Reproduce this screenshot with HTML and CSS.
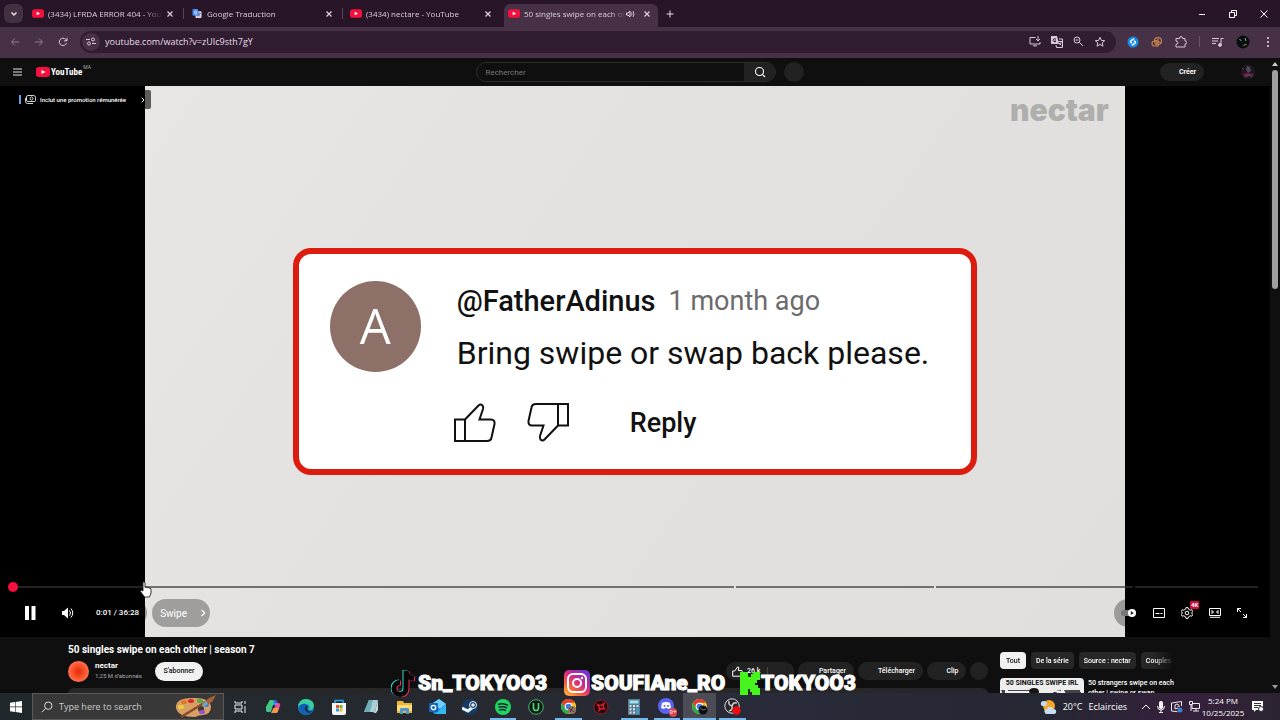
FILE: index.html
```html
<!DOCTYPE html>
<html lang="fr">
<head>
  <meta charset="UTF-8">
  <title>50 singles swipe on each other - YouTube</title>
  <link rel="stylesheet" href="styles.css">
</head>
<body>

  <svg class="sprites" aria-hidden="true">
    <symbol id="yt" viewBox="0 0 14 10"><rect width="14" height="10" rx="3" fill="#f50f3d"/><path d="M5.5 3v4l4-2z" fill="#fff"/></symbol>
    <symbol id="close" viewBox="0 0 8 8"><path d="M1.500 1.500l5 5m0-5l-5 5" fill="none" stroke="currentColor" stroke-width="1.2"/></symbol>
    <symbol id="chrome" viewBox="0 0 18 18">
      <circle cx="9" cy="9" r="8" fill="#f5c52b"/>
      <path d="M2.100 5A8 8 0 0 1 15.900 5H9A4 4 0 0 0 5.500 11z" fill="#e33b2e"/>
      <path d="M2.100 5A8 8 0 0 0 9 17l3.500-6A4 4 0 0 1 5.500 11z" fill="#2da94f"/>
      <circle cx="9" cy="9" r="4" fill="#fff"/><circle cx="9" cy="9" r="3" fill="#3b7ded"/>
    </symbol>
  </svg>

  <header class="tabs">
    <button class="tab-search" aria-label="Search tabs"><svg width="8" height="8" viewBox="0 0 8 8"><path d="M1.500 2.500L4 5l2.500-2.500" fill="none" stroke="#e8dce8" stroke-width="1.500"/></svg></button>
    <div class="tab">
      <svg class="favicon"><use href="#yt"/></svg>
      <span class="tab-title">(3434) LFRDA ERROR 404 - You</span>
      <button class="close" aria-label="Close"><svg><use href="#close"/></svg></button>
    </div>
    <div class="tab">
      <svg class="favicon" viewBox="0 0 12 12"><rect x="4" y="3" width="8" height="9" rx="1" fill="#dcdcdc"/><path d="M6 6h5M8.500 5v1M7 10l3-4M7 7l3 3" stroke="#667" fill="none"/><path d="M1 0h6l2.500 9H1a1 1 0 0 1-1-1V1a1 1 0 0 1 1-1z" fill="#4688ef"/><path d="M6 3.500A2 2 0 1 0 6 6V5H4.500" stroke="#fff" fill="none"/></svg>
      <span class="tab-title">Google Traduction</span>
      <button class="close" aria-label="Close"><svg><use href="#close"/></svg></button>
    </div>
    <div class="tab no-line">
      <svg class="favicon"><use href="#yt"/></svg>
      <span class="tab-title">(3434) nectare - YouTube</span>
      <button class="close" aria-label="Close"><svg><use href="#close"/></svg></button>
    </div>
    <div class="tab active no-line">
      <svg class="favicon"><use href="#yt"/></svg>
      <span class="tab-title">50 singles swipe on each ot</span>
      <svg class="sound" width="9" height="8" viewBox="0 0 9 8"><path d="M.5 3h1.500l2-2v6l-2-2H.5z" fill="none" stroke="#e8dce8"/><path d="M5.500 2.500q1 1.500 0 3M7 1q2 3 0 6" fill="none" stroke="#e8dce8" stroke-width=".8"/></svg>
      <button class="close" aria-label="Close"><svg><use href="#close"/></svg></button>
    </div>
    <button class="new-tab" aria-label="New tab"><svg width="8" height="8" viewBox="0 0 8 8"><path d="M4 .5v7M.5 4h7" stroke="#e8dce8"/></svg></button>
    <div class="window-buttons">
      <button aria-label="Minimize"><svg width="8" height="8" viewBox="0 0 8 8"><path d="M1 4.500h6" stroke="#fff"/></svg></button>
      <button aria-label="Restore"><svg width="8" height="8" viewBox="0 0 8 8"><path d="M.5 2.500h5v5h-5zM2.500 2.500v-2h5v5h-2" fill="none" stroke="#fff"/></svg></button>
      <button aria-label="Close window"><svg width="8" height="8" viewBox="0 0 8 8"><path d="M.5.5l7 7m0-7l-7 7" stroke="#fff"/></svg></button>
    </div>
  </header>

  <div class="toolbar">
    <button class="nav dim" aria-label="Back"><svg width="10" height="10" viewBox="0 0 10 10"><path d="M9 5H1.500M5 1.500L1.500 5 5 8.500"/></svg></button>
    <button class="nav dim" aria-label="Forward"><svg width="10" height="10" viewBox="0 0 10 10"><path d="M1 5h7.500M5 1.500L8.500 5 5 8.500"/></svg></button>
    <button class="nav" aria-label="Reload"><svg width="10" height="10" viewBox="0 0 10 10"><path d="M8.500 6A3.700 3.700 0 1 1 7.800 2.500L9 3.700M9 .8v3H6"/></svg></button>
    <div class="omnibox">
      <button class="site-info" aria-label="Site information"><svg width="10" height="9" viewBox="0 0 10 9"><path d="M0 2.500h4M6 6.500h4"/><circle cx="7" cy="2.500" r="1.500"/><circle cx="3" cy="6.500" r="1.500"/></svg></button>
      <input class="url" type="text" aria-label="Address" value="youtube.com/watch?v=zUIc9sth7gY">
      <div class="omni-icons">
        <button aria-label="Install"><svg width="12" height="11" viewBox="0 0 12 11"><path d="M6.500 1.500H1v6.500h10V6M4 9.800h4M9 0v4.500M7 3l2 2 2-2"/></svg></button>
        <button aria-label="Translate"><svg width="12" height="12" viewBox="0 0 12 12"><path d="M0 0h6l2 8H0z" fill="#d8c9d8" stroke="none"/><path d="M5 3.500A1.500 1.500 0 1 0 5 5H3.500" stroke="#311d31"/><path d="M8 3h3.500v8.500H5.500L5 9M7 5.500h4M8.500 8.500L10.500 6M8 7l2.500 2.500"/></svg></button>
        <button aria-label="Zoom"><svg width="11" height="11" viewBox="0 0 11 11"><circle cx="4" cy="4" r="3"/><path d="M6.300 6.300L10 10M2.500 4h3"/></svg></button>
        <button aria-label="Bookmark"><svg width="12" height="12" viewBox="0 0 12 12"><path d="M6 1.300l1.400 3.100 3.300.3-2.500 2.200.8 3.300L6 8.400l-3 1.800.8-3.300-2.500-2.200 3.300-.3z"/></svg></button>
      </div>
    </div>
    <div class="extensions">
      <button aria-label="Shazam"><svg width="12" height="12" viewBox="0 0 12 12"><circle cx="6" cy="6" r="5.500" fill="#198ae8" stroke="none"/><path d="M7 2.800L4.500 4.300Q2.500 6 5 7M5 9.200l2.500-1.500Q9.500 6 7 5" stroke="#fff" stroke-width="1.400"/></svg></button>
      <button aria-label="Cookies"><svg width="12" height="12" viewBox="0 0 12 12"><g stroke="#c9844e" stroke-width="1.200"><circle cx="7" cy="5" r="3.500"/><circle cx="3.500" cy="7.500" r="2.500"/><path d="M7 1.500V9M4 4l6 3M8 8.500L6 11"/></g></svg></button>
      <button aria-label="Extensions"><svg width="12" height="12" viewBox="0 0 12 12"><path d="M1 2.500h3.500q0-2 1.500-2t1.500 2H10V5q1.700 0 1.700 1.500T10 8v3H1V8.300Q3 8 3 6.700T1 5z"/></svg></button>
      <span class="divider"></span>
      <button aria-label="Media"><svg width="12" height="10" viewBox="0 0 12 10"><path d="M0 1.500h7M0 4h6M0 6.500h4M9 8V1.500h2.500"/><circle cx="8" cy="8" r="1.400" fill="#d8c9d8"/></svg></button>
      <button aria-label="Profile"><svg width="14" height="14" viewBox="0 0 14 14"><circle cx="7" cy="7" r="6.500" fill="#090d10" stroke="none"/><path d="M3.500 4.500l2 1M9 3l1 3" stroke="#8b9"/><path d="M8 9l3 1M7 11l2-1" stroke="#697c28"/></svg></button>
      <button class="kebab" aria-label="Menu"><svg width="4" height="12" viewBox="0 0 4 12"><g fill="#e8dce8" stroke="none"><circle cx="2" cy="2" r="1"/><circle cx="2" cy="6" r="1"/><circle cx="2" cy="10" r="1"/></g></svg></button>
    </div>
  </div>

  <div class="viewport">
    <div class="page">
      <div class="masthead">
        <button class="burger" aria-label="Menu"><svg width="9" height="8" viewBox="0 0 9 8"><path d="M0 1h9M0 4h9M0 7h9" stroke="#e5e5e5"/></svg></button>
        <a class="logo" href="#"><svg width="14" height="10"><use href="#yt"/></svg><span class="logo-text">YouTube</span><span class="country">MA</span></a>
        <form class="search">
          <input type="text" aria-label="Rechercher" placeholder="Rechercher">
          <button type="button" aria-label="Lancer la recherche"><svg width="12" height="12" viewBox="0 0 12 12"><circle cx="5.500" cy="5.500" r="4" fill="none" stroke="#fff" stroke-width="1.100"/><path d="M8.500 8.500l2.500 2.500" stroke="#fff" stroke-width="1.100"/></svg></button>
        </form>
        <button class="mic" aria-label="Recherche vocale"></button>
        <button class="create">Créer</button>
        <svg class="me" width="16" height="16" viewBox="0 0 16 16"><circle cx="8" cy="8" r="7.500" fill="#1d1720"/><path d="M7 2l3 1 1 4-3 2-2-3z" fill="#4f4a58"/><path d="M3 10l4-1 6 1 1 2-5-1-5 2z" fill="#7d1749"/><path d="M5 13l4-2 3 2" stroke="#55606a" fill="none"/><path d="M2 4l2 2" stroke="#8d214c"/></svg>
      </div>

      <div class="player">
        <div class="video">
          <span class="watermark">nectar</span>
          <div class="comment">
            <span class="letter">A</span>
            <div class="comment-body">
              <p class="author"><b>@FatherAdinus</b><span>1 month ago</span></p>
              <p class="message">Bring swipe or swap back please.</p>
              <div class="comment-actions">
                <button aria-label="Like"><svg width="42" height="39" viewBox="0 0 42 39"><path d="M1 16.500h10V38H1zM11 16.500L24.500 2.500Q26.500.5 28.500 2.500q1 1 .5 3.500l-3.500 10.500H37q4 0 3.500 4.500L37.500 34.500Q37 38 33 38H11"/></svg></button>
                <button aria-label="Dislike"><svg width="42" height="39" viewBox="0 0 42 39"><path d="M41 22.500H31V1h10zM31 22.500L17.500 36.500Q15.500 38.500 13.500 36.500q-1-1-.5-3.500l3.500-10.500H5q-4 0-3.500-4.500L4.500 4.500Q5 1 9 1h22"/></svg></button>
                <button class="reply">Reply</button>
              </div>
            </div>
          </div>
        </div>

        <a class="promo" href="#">
          <svg width="11" height="9" viewBox="0 0 11 9"><path d="M3 .5h5.500q2 0 2 2v3q0 1-1 1H3q-1.500 0-1.500-1.500V2Q1.500.5 3 .5zM.5 3v3.500q0 2 2 2H8" fill="none" stroke="#eee" stroke-width=".9"/><circle cx="6.500" cy="3.500" r="1.500" fill="none" stroke="#eee" stroke-width=".9"/></svg>
          <span>Inclut une promotion rémunérée</span>
          <svg class="promo-arrow" width="4" height="6" viewBox="0 0 4 6"><path d="M.7.7L3 3 .7 5.300" fill="none" stroke="#fff"/></svg>
        </a>

        <div class="controls">
          <div class="progress">
            <i class="chapter c1"></i><i class="chapter c2"></i><i class="chapter c3"></i><i class="chapter c4"></i>
            <span class="scrubber"></span>
          </div>
          <div class="buttons">
            <button class="pause" aria-label="Pause"><svg width="11" height="14" viewBox="0 0 11 14"><path d="M0 0h4v14H0zM6.500 0h4v14h-4z" fill="#fff"/></svg></button>
            <button class="volume" aria-label="Volume"><svg width="12" height="12" viewBox="0 0 12 12"><path d="M0 4h2l4-3.500v11L2 8H0z" fill="#fff"/><path d="M7.500 3.500q2 2.500 0 5M9 1.500q3.500 4.500 0 9" fill="none" stroke="#fff"/></svg></button>
            <span class="time">0:01 / 36:28</span>
            <button class="chapter-button">Swipe <svg width="6" height="8" viewBox="0 0 6 8"><path d="M1.500.8L4.700 4 1.500 7.200" fill="none" stroke="#fff" stroke-width="1.200"/></svg></button>
            <div class="settings">
              <button aria-label="Lecture automatique"><svg width="16" height="10" viewBox="0 0 16 10"><rect y="2" width="14" height="6" rx="3" fill="#777"/><circle cx="11" cy="5" r="4" fill="#fff"/><path class="play" d="M9.800 3v4l3-2z"/></svg></button>
              <button aria-label="Sous-titres"><svg width="12" height="10" viewBox="0 0 12 10"><path d="M.5.5h11v9H.5zM2.500 5.500h4M7.500 5.500h2"/></svg></button>
              <button class="gear" aria-label="Paramètres"><svg width="12" height="12" viewBox="0 0 12 12"><path d="M5 .6h2l.5 1.600 1.700 1 1.600-.4 1 1.700L10.600 6l1.200 1.500-1 1.700-1.600-.4-1.700 1-.5 1.600H5l-.5-1.600-1.700-1-1.600.4-1-1.700L1.400 6 .2 4.500l1-1.700 1.600.4 1.700-1z"/><circle cx="6" cy="6" r="1.800"/></svg><span class="badge">4K</span></button>
              <button aria-label="Mode cinéma"><svg width="12" height="10" viewBox="0 0 12 10"><path d="M.5.5h11v7H.5zM1 9.300h10M3 2.500v3L4.500 4zM9 2.500v3L7.500 4z"/></svg></button>
              <button aria-label="Plein écran"><svg width="10" height="10" viewBox="0 0 10 10"><path d="M.5 4V.5H4M.5.500l3.500 3.500M9.500 6v3.500H6M9.500 9.500L6 6"/></svg></button>
            </div>
          </div>
        </div>
        <svg class="cursor" width="14" height="17" viewBox="0 0 14 17"><path d="M4 1q1.500-.8 2 1v4.500l1-.5 1 .7 1-.4 1 .9 1-.2 1 1v4l-1.500 4H5.500L1.500 10.500Q1.500 8.500 4 10z" fill="#fff" stroke="#222" stroke-width=".9"/></svg>
      </div>

      <div class="below">
        <main class="primary">
          <h1>50 singles swipe on each other | season 7</h1>
          <div class="channel-row">
            <span class="channel-pic"></span>
            <div class="channel"><b>nectar</b><span>1,25 M d'abonnés</span></div>
            <button class="subscribe">S'abonner</button>
            <div class="actions">
              <button class="like"><svg width="11" height="11" viewBox="0 0 11 11"><path d="M.7 5h2L5.500 1q1.500-.5 1.300 1L6.200 4.500h3q1.300 0 1 1.300l-1 3.400q-.3 1-1.300 1H.7z" fill="none" stroke="#fff"/></svg><span>26 k</span></button>
              <button class="share">Partager</button>
              <button class="download">Télécharger</button>
              <button class="clip">Clip</button>
              <button class="more" aria-label="Plus"></button>
            </div>
          </div>
          <div class="description"></div>
        </main>
        <aside class="secondary">
          <div class="chips">
            <button class="chip selected">Tout</button>
            <button class="chip">De la série</button>
            <button class="chip">Source : nectar</button>
            <button class="chip">Couples</button>
          </div>
          <div class="suggestion">
            <div class="thumb"><span>50 SINGLES SWIPE IRL</span>
              <svg width="84" height="12" viewBox="0 0 84 12"><path d="M1 2h4v10M8 2h24v1H8zM8 5h3v2H8zM14 5h8v1M56 2h5v1M64 2h16v4H66zM76 4h5v8" fill="#444"/><path d="M30 12q0-7 4-7t4 7" fill="#b98468"/><path d="M29 4q0-4 5-4t5 4l-1 2-8-1z" fill="#17130f"/><path d="M50 12q1-8 5-8t4 8" fill="#2a2423"/></svg>
            </div>
            <a class="suggestion-title" href="#">50 strangers swipe on each other | swipe or swap</a>
          </div>
        </aside>
      </div>
    </div>

    <div class="scrollbar">
      <svg width="6" height="4" viewBox="0 0 6 4"><path d="M0 4l3-4 3 4z" fill="#ccc"/></svg>
      <span class="scroll-thumb"></span>
      <svg width="6" height="4" viewBox="0 0 6 4"><path d="M0 0l3 4 3-4z" fill="#999"/></svg>
    </div>
  </div>

  <div class="socials">
    <div class="social">
      <svg width="26" height="28" viewBox="0 0 26 28"><g fill="none" stroke-width="5"><path d="M14 1v18a6 6 0 1 1-6-6M14 2q1 6 8 7" stroke="#35d6cc"/><path d="M16 2v18a6 6 0 1 1-6-6M16 3q1 6 8 7" stroke="#e92e58"/><path d="M15 1.500v18a6 6 0 1 1-6-6M15 2.500q1 6 8 7" stroke="#060606"/></g></svg>
      <span>Sn_TOKYOO3</span>
    </div>
    <div class="social">
      <svg width="26" height="26" viewBox="0 0 26 26"><defs><linearGradient id="ig" x1="0" y1="1" x2=".8" y2="0"><stop offset="0" stop-color="#ffc63e"/><stop offset=".3" stop-color="#fa6a35"/><stop offset=".6" stop-color="#d42a86"/><stop offset="1" stop-color="#6c37d6"/></linearGradient></defs><rect width="26" height="26" rx="5" fill="url(#ig)"/><rect x="4" y="4" width="18" height="18" rx="5" fill="none" stroke="#fff" stroke-width="2"/><circle cx="13" cy="13" r="4" fill="none" stroke="#fff" stroke-width="2"/><circle cx="18" cy="8" r="1.200" fill="#fff"/></svg>
      <span>SOUFIAne_RO</span>
    </div>
    <div class="social">
      <svg width="20" height="23" viewBox="0 0 20 23"><path d="M0 0h8v5h3V2h2V0h7v8h-3v3h-2v2h3v3h2v7h-8v-3h-2v-3H8v6H0z" fill="#45f51d"/></svg>
      <span>TOKYOO3</span>
    </div>
  </div>

  <footer class="taskbar">
    <button class="start" aria-label="Start"><svg width="12" height="12" viewBox="0 0 12 12"><path d="M0 1.700L5 1v4.600H0zM5.600.9L12 0v5.600H5.600zM0 6.300h5V11l-5-.7zM5.600 6.300H12V12l-6.400-.9z" fill="#fff"/></svg></button>
    <label class="task-search">
      <svg width="12" height="12" viewBox="0 0 12 12"><circle cx="7.300" cy="4.700" r="3.700" fill="none" stroke="#ddd"/><path d="M4.500 7.500L.8 11.200" stroke="#ddd"/></svg>
      <input type="text" placeholder="Type here to search" aria-label="Type here to search">
      <svg width="42" height="24" viewBox="0 0 42 24"><path d="M1 13Q0 3 17 3q18-1 19 9 0 7-8 8-4 0-8 2Q3 22 1 13z" fill="#d9a066"/><circle cx="26" cy="14" r="3" fill="#3a3a3a"/><ellipse cx="6" cy="12" rx="3" ry="2" fill="#f1cf3b"/><ellipse cx="9" cy="7" rx="3" ry="2" fill="#e97327"/><ellipse cx="16" cy="6" rx="3" ry="2" fill="#d12c2f"/><ellipse cx="25" cy="6" rx="3" ry="2" fill="#4dae4c"/><ellipse cx="31" cy="10" rx="3" ry="2" fill="#4185d6"/><ellipse cx="27" cy="17" rx="3" ry="2" fill="#9a51c9"/><path d="M6 22L34 5" stroke="#8b4a27" stroke-width="2.500"/><path d="M30 7l4-4 7-3-4 7-5 3z" fill="#aa623d"/><path d="M27 9l4-3 2 3-4 3z" fill="#70a5c4"/></svg>
    </label>

    <nav class="apps">
      <button aria-label="Task View"><svg width="12" height="12" viewBox="0 0 12 12"><path d="M1 0v2h7V0M1 12v-2h7v2M1 4h7v4H1zM11 0v3M11 5v7" fill="none" stroke="#eee"/></svg></button>
      <button aria-label="Copilot"><svg width="16" height="15" viewBox="0 0 16 15"><path d="M5 1h5q1.500 0 2 2l1 3H8L6 13H3q-2 0-2-2V8z" fill="#2ba5e8"/><path d="M5 1h4L6 11q-.5 2-3 2-2 0-2-2V8z" fill="#44c879"/><path d="M11 14H6q2 0 2.500-2L11 4h2q3 0 2 3l-2 5q-.5 2-2 2z" fill="#e2559d"/><path d="M6 14l2.500-5H14l-1 3q-.5 2-2 2z" fill="#f79549"/><path d="M8 1h2q2 0 2.500 3H10z" fill="#355fdf"/></svg></button>
      <button aria-label="Edge"><svg width="16" height="16" viewBox="0 0 16 16"><circle cx="8" cy="8" r="8" fill="#1687d7"/><path d="M0 8Q1 0 8 0q8 1 8 7-1 4-5 4 2-5-3-6-6 0-8 3z" fill="#3bcf9c"/><path d="M1 7q6-5 9 0-4 0-3 4 3 4 8 1-3 4-7 4Q1 15 1 7z" fill="#1361b4"/><path d="M10 7q-2 4 1 5 3 1 4-1-2 4-6 2-4-3-1-6z" fill="#182d3c"/></svg></button>
      <button aria-label="Store"><svg width="16" height="16" viewBox="0 0 16 16"><path d="M4 4V1.500h8V4" fill="none" stroke="#26a4e8" stroke-width="1.500"/><path d="M1 4h14v10q0 2-2 2H3q-2 0-2-2z" fill="#f5f5f5"/><path d="M5 6h3v3H5z" fill="#ef5128"/><path d="M8.500 6h3v3h-3z" fill="#78b526"/><path d="M5 9.500h3v3H5z" fill="#21a2e1"/><path d="M8.500 9.500h3v3h-3z" fill="#f6b71f"/></svg></button>
      <button aria-label="Notepad"><svg width="15" height="15" viewBox="0 0 15 15"><path d="M5 1h9l-3 12H0z" fill="#a8d0d4"/><path d="M5 1h4L6 13H0z" fill="#6faeb8"/><path d="M14 1v10l-2 3H9l2-1z" fill="#d4dbd9"/></svg></button>
      <button aria-label="Explorer"><svg width="15" height="14" viewBox="0 0 15 14"><path d="M0 1h6l1 2h8v10H0z" fill="#efb535"/><path d="M0 5h15v6H0z" fill="#ffdc77"/><path d="M3 14V9q0-1 1-1h7q1 0 1 1v5h-3v-3H6v3z" fill="#4c98c9"/></svg></button>
      <button aria-label="Outlook"><svg width="17" height="16" viewBox="0 0 17 16"><path d="M4 4l6-4 7 5v9q0 1-1 1H6q-2 0-2-2z" fill="#178be5"/><path d="M4 4l6-4 7 5-6 5z" fill="#72d0ff"/><path d="M6 15l11-9v8q0 1-1 1z" fill="#35b8f5"/><rect y="4" width="9" height="9" rx="1" fill="#1265bb"/><circle cx="4.500" cy="8.500" r="2.200" fill="none" stroke="#fff" stroke-width="1.300"/></svg></button>
      <button aria-label="Steam"><svg width="16" height="16" viewBox="0 0 16 16"><circle cx="8" cy="8" r="8" fill="#173a64"/><path d="M0 9l6 3 5-4" stroke="#e8f3fb" stroke-width="3" fill="none"/><circle cx="11" cy="6" r="3.500" fill="#173a64" stroke="#e8f3fb"/><circle cx="11" cy="6" r="1.800" fill="#e8f3fb"/></svg></button>
      <button class="open" aria-label="Spotify"><svg width="16" height="16" viewBox="0 0 16 16"><circle cx="8" cy="8" r="8" fill="#1ed760"/><path d="M3 5.500q5-2 10 .8M3.500 8.300q4.500-1.500 8.500.7M4 11q4-1.200 7 .6" fill="none" stroke="#123" stroke-width="1.500"/></svg></button>
      <button aria-label="Uninstaller"><svg width="16" height="16" viewBox="0 0 16 16"><circle cx="8" cy="8" r="7.300" fill="#0d1b14" stroke="#4ab26a"/><path d="M5.500 4v5q0 2.500 2.500 2.500t2.500-2.500V4" fill="none" stroke="#58ca77" stroke-width="1.700"/></svg></button>
      <button class="open" aria-label="Chrome"><svg width="17" height="17"><use href="#chrome"/><circle cx="12" cy="12" r="4" fill="#957568"/><path d="M9 10l5 4M13 9l-3 5" stroke="#46372e"/></svg></button>
      <button aria-label="Recorder"><svg width="16" height="16" viewBox="0 0 16 16"><circle cx="8" cy="8" r="7" fill="#220b0e" stroke="#981927"/><path d="M4.500 5.500l3 1 3.500-2-1 3 1.500 2.500-3-.5L6 11.500 6.500 9z" fill="none" stroke="#e0202f" stroke-width="1.300"/></svg></button>
      <button class="open" aria-label="Calculator"><svg width="12" height="16" viewBox="0 0 12 16"><rect width="12" height="16" fill="#587b90"/><path d="M1.500 1.500h9v3h-9z" fill="#9ee1f3"/><path d="M1.500 6h2v2h-2zM5 6h2v2H5zM8.500 6h2v2h-2zM1.500 9.300h2v2h-2zM5 9.300h2v2H5zM1.500 12.600h2v2h-2zM5 12.600h2v2H5z" fill="#dae4e9"/><path d="M8.500 9.300h2v5.300h-2z" fill="#39a9e4"/></svg></button>
      <button class="open" aria-label="Discord"><svg width="17" height="17" viewBox="0 0 17 17"><circle cx="8" cy="8" r="8" fill="#5865f2"/><path d="M4 5q4-2 8 0l1 5-3 1-1-1H7l-1 1-3-1z" fill="#fff"/><circle cx="6.500" cy="8" r="1" fill="#5865f2"/><circle cx="10" cy="8" r="1" fill="#5865f2"/></svg><span class="count">9+</span></button>
      <button class="open current" aria-label="Chrome"><svg width="17" height="17"><use href="#chrome"/><circle cx="12" cy="12" r="4.500" fill="#0b1014"/><path d="M9 10l3 2 3-1" stroke="#667" fill="none"/></svg></button>
      <button class="open" aria-label="OBS"><svg width="17" height="17" viewBox="0 0 17 17"><circle cx="8" cy="8" r="7.200" fill="#28282c" stroke="#ddd"/><path d="M8 8Q4 7 5 3M8 8q1-4 5-3M8 8q1 4-3 5" stroke="#ccc" stroke-width="1.500" fill="none"/><circle cx="12.500" cy="12.500" r="4.200" fill="#f10b0b"/></svg></button>
    </nav>

    <div class="tray">
      <button class="weather"><svg width="17" height="16" viewBox="0 0 17 16"><circle cx="9" cy="7" r="6" fill="#f6a623"/><path d="M1 6q-1-4 3-4 3 0 3 3 0 2-2 2H3Q1 7 1 6z" fill="#bfdcf5"/><path d="M5 14q-2-4 2-4 1-3 4-2 2 1 2 2 4 0 3 4-1 1-2 1H7q-2 0-2-1z" fill="#c6def4"/></svg><span>20°C</span><span>Eclaircies</span></button>
      <div class="tray-icons">
        <svg width="10" height="6" viewBox="0 0 10 6"><path d="M1 5l4-4 4 4" fill="none" stroke="#fff"/></svg>
        <svg width="8" height="12" viewBox="0 0 8 12"><rect x="2" width="4" height="8" rx="2" fill="#fff"/><path d="M.5 5q0 4 3.500 4t3.500-4M4 9v2.500M2 11.500h4" fill="none" stroke="#fff"/></svg>
        <svg width="12" height="12" viewBox="0 0 12 12"><path d="M10.500 5V.5L.5 2v8l6 .7M8 4Q6 2 4 4v4l3-1M6.500 5.500L9 5" fill="none" stroke="#eee"/><circle cx="9" cy="9" r="2.500" fill="#3a82ce"/></svg>
        <svg width="11" height="11" viewBox="0 0 11 11"><path d="M4 2.500h6.500v5H3V4M7 7.500v2.500M4 10h6M.5.5h3v3h-3zM2 3.500V10" fill="none" stroke="#eee"/></svg>
      </div>
      <div class="clock"><span>5:24 PM</span><span>10/25/2025</span></div>
      <button class="notifications" aria-label="Notifications"><svg width="12" height="12" viewBox="0 0 12 12"><path d="M0 0h11v9H4l-2 2V9H0z" fill="#fff"/><path d="M2 2.500h7M2 4.500h7M2 6.500h4" stroke="#333"/><circle cx="9" cy="8" r="2.500" fill="#fff" stroke="#33263a"/></svg></button>
    </div>
  </footer>

</body>
</html>
```

FILE: styles.css
```css
* {
  box-sizing: border-box;
  margin: 0;
  padding: 0;
}

body {
  height: 100vh;
  overflow: hidden;
  display: flex;
  flex-direction: column;
  position: relative;
  background: #0f0f0f;
  color: #fff;
  font-family: Roboto, sans-serif;
}

button, input {
  font: inherit;
  color: inherit;
  background: none;
  border: none;
  outline: none;
}

button {
  cursor: pointer;
  white-space: nowrap;
}

a {
  color: inherit;
  text-decoration: none;
}

svg {
  display: block;
  flex: none;
}

.sprites {
  position: absolute;
  width: 0;
  height: 0;
}

/* browser */
.tabs, .toolbar, .taskbar {
  font-family: "Open Sans", "Noto Sans", sans-serif;
  font-size: 9px;
  flex: none;
  display: flex;
  align-items: center;
}

.tabs {
  height: 27px;
  background: #291528;
  color: #dccfdc;
  font-size: 8px;
}

.tab-search {
  width: 19px;
  height: 19px;
  margin: 0 4px;
  border-radius: 6px;
  background: #43313f;
  display: grid;
  place-items: center;
}

.tab {
  width: 159px;
  height: 23px;
  padding: 0 12px 4px 5px;
  align-self: flex-end;
  display: flex;
  align-items: center;
  gap: 4px;
  position: relative;
}

.tab::after {
  content: "";
  position: absolute;
  right: 2px;
  top: 4px;
  width: 1px;
  height: 11px;
  background: #57445a;
}

.no-line::after {
  display: none;
}

.tab.active {
  width: 154px;
  padding-left: 4px;
  padding-right: 7px;
  background: #463146;
  border-radius: 6px 6px 0 0;
}

.tab.active .tab-title {
  margin-right: -4px;
}

.sound {
  margin-right: 4px;
}

.favicon {
  width: 12px;
  height: 9px;
}

.tab-title {
  flex: 1;
  overflow: hidden;
  white-space: nowrap;
  mask-image: linear-gradient(90deg, #000 85%, transparent);
}

.close {
  width: 8px;
  height: 8px;
}

.close svg {
  width: 8px;
  height: 8px;
}

.new-tab {
  margin-left: 8px;
}

.window-buttons {
  margin-left: auto;
  margin-right: 12px;
  display: flex;
  gap: 23px;
}

.toolbar {
  height: 31px;
  padding: 0 10px 2px;
  background: #463146;
}

.toolbar svg {
  fill: none;
  stroke: #d8c9d8;
}

.nav {
  width: 10px;
  margin-right: 14px;
}

.nav.dim {
  opacity: .5;
}

.omnibox {
  flex: 1;
  height: 22px;
  margin-left: -2px;
  padding: 0 10px 0 2px;
  border-radius: 11px;
  background: #311d31;
  display: flex;
  align-items: center;
}

.site-info {
  width: 18px;
  height: 18px;
  border-radius: 50%;
  background: #463146;
  display: grid;
  place-items: center;
}

.url {
  flex: 1;
  padding-left: 5px;
  font-size: 9px;
  color: #e8dce8;
}

.omni-icons {
  display: flex;
  align-items: center;
  gap: 10px;
}

.extensions {
  display: flex;
  align-items: center;
  gap: 12px;
  margin-left: 11px;
}

.kebab {
  margin-left: 4px;
}

.divider {
  width: 1px;
  height: 11px;
  background: #6b566b;
}

/* page */
.viewport {
  flex: 1;
  min-height: 0;
  display: flex;
  overflow: hidden;
}

.page {
  flex: 1;
  min-width: 0;
  overflow: hidden;
}

.scrollbar {
  width: 10px;
  padding: 4px 0;
  display: flex;
  flex-direction: column;
  align-items: center;
}

.scroll-thumb {
  width: 6px;
  height: 35%;
  margin: 4px 0 auto;
  border-radius: 3px;
  background: #9f9f9f;
}

.masthead {
  height: 28px;
  padding: 0 14px 0 13px;
  display: flex;
  align-items: center;
  position: relative;
}

.logo {
  display: flex;
  align-items: center;
  gap: 1px;
  margin: 0 30px 0 14px;
}

.logo-text {
  font-family: "Roboto Condensed", "Liberation Sans Narrow", Roboto, sans-serif;
  font-size: 9px;
  font-weight: 700;
}

.country {
  align-self: flex-start;
  margin-top: -3px;
  font-size: 5px;
  color: #aaa;
}

.search {
  width: 300px;
  height: 20px;
  margin-left: auto;
  display: flex;
  border: 1px solid #2c2c2c;
  border-radius: 10px;
  overflow: hidden;
}

.search input {
  flex: 1;
  min-width: 0;
  padding-left: 8px;
  font-size: 8px;
}

.search input::placeholder {
  color: #777;
}

.search button {
  width: 31px;
  background: #222;
  display: grid;
  place-items: center;
}

.mic {
  width: 20px;
  height: 20px;
  margin-left: 8px;
  border-radius: 50%;
  background: #222;
}

.create {
  height: 18px;
  width: 44px;
  margin-left: auto;
  padding-left: 11px;
  border-radius: 9px;
  background: #222;
  font-size: 7px;
  font-weight: 700;
}

.me {
  margin-left: 36px;
}

.player {
  height: calc(100vh - 169px);
  background: #000;
  position: relative;
}

.video {
  height: 100%;
  aspect-ratio: 16 / 9;
  margin: 0 auto;
  display: grid;
  place-items: center;
  position: relative;
  background: linear-gradient(125deg, #e7e6e5, #e2e1df 50%, #e0dfdd);
}

.watermark {
  position: absolute;
  top: 8px;
  right: 16px;
  font: 900 30px/32px Inter, sans-serif;
  color: #aeaeac;
}

.comment {
  padding: 27px 42px 27px 31px;
  border: 6px solid #dd1c10;
  border-radius: 18px;
  background: #fff;
  color: #111;
  display: flex;
  gap: 36px;
}

.letter {
  width: 91px;
  height: 91px;
  border-radius: 50%;
  background: #8d7068;
  color: #fff;
  font: 500 49px/89px "Open Sans", sans-serif;
  text-align: center;
}

.author {
  display: flex;
  gap: 13px;
  font-size: 27px;
  line-height: 40px;
}

.author b {
  font-size: 29px;
  font-weight: 500;
}

.author span {
  color: #6b6b6b;
}

.message {
  margin-top: 10px;
  font-size: 32px;
  line-height: 44px;
}

.comment-actions {
  display: flex;
  align-items: center;
  gap: 31px;
  margin-top: 28px;
  margin-left: -3px;
}

.comment-actions path {
  fill: none;
  stroke: #111;
  stroke-width: 2;
}

.reply {
  margin-left: 30px;
  font-size: 27px;
  font-weight: 500;
  line-height: 36px;
}

.promo {
  position: absolute;
  left: 19px;
  top: 4px;
  height: 19px;
  width: 132px;
  display: flex;
  align-items: center;
  gap: 4px;
  padding-left: 6px;
  border-radius: 0 2px 2px 0;
  background: rgba(0, 0, 0, .6);
  font-size: 6px;
  font-weight: 500;
  white-space: nowrap;
}

.promo::before {
  content: "";
  position: absolute;
  left: 0;
  top: 5px;
  width: 2px;
  height: 9px;
  background: #5e9fe6;
}

.promo-arrow {
  margin: 0 6px 0 auto;
}

.controls {
  position: absolute;
  left: 13px;
  right: 12px;
  bottom: 10px;
}

.progress {
  display: flex;
  gap: 2px;
  position: relative;
}

.chapter {
  height: 2px;
  background: rgba(52, 52, 52, .65);
}

.c1 { flex: 720; }
.c2 { flex: 198; }
.c3 { flex: 197; }
.c4 { flex: 123; }

.scrubber {
  position: absolute;
  left: -5px;
  top: -4px;
  width: 10px;
  height: 10px;
  border-radius: 50%;
  background: #f50f3d;
}

.buttons {
  display: flex;
  align-items: center;
  height: 28px;
  margin-top: 11px;
}

.pause {
  margin-left: 12px;
}

.volume {
  margin-left: 26px;
}

.time {
  height: 28px;
  margin-left: 14px;
  padding: 0 8px;
  border-radius: 14px;
  background: rgba(0, 0, 0, .3);
  font-size: 8px;
  font-weight: 500;
  line-height: 28px;
}

.chapter-button {
  height: 28px;
  width: 58px;
  margin-left: 5px;
  padding: 0 4px 0 8px;
  border-radius: 14px;
  background: rgba(0, 0, 0, .3);
  display: flex;
  align-items: center;
  justify-content: space-between;
  font-size: 10px;
}

.settings {
  height: 28px;
  margin-left: auto;
  padding: 0 11px 0 7px;
  border-radius: 14px;
  background: rgba(0, 0, 0, .3);
  display: flex;
  align-items: center;
  gap: 16px;
}

.settings path, .gear circle {
  fill: none;
  stroke: #fff;
}

.settings .play {
  fill: #222;
  stroke: none;
}

.gear {
  position: relative;
}

.badge {
  position: absolute;
  left: 9px;
  top: -6px;
  padding: 0 1px;
  border-radius: 1px;
  background: #d70b3b;
  font-size: 6px;
  font-weight: 700;
  line-height: 8px;
}

.cursor {
  position: absolute;
  left: 139px;
  top: 495px;
}

.below {
  display: flex;
  gap: 12px;
  padding: 0 96px 0 68px;
}

.primary {
  flex: 1;
  min-width: 0;
}

h1 {
  margin-top: 5px;
  font-size: 10px;
  font-weight: 700;
  line-height: 16px;
}

.channel-row {
  display: flex;
  align-items: center;
  height: 22px;
  margin-top: 2px;
  font-size: 7px;
}

.channel-pic {
  width: 21px;
  height: 21px;
  border-radius: 50%;
  background: radial-gradient(circle, #e8320f 10%, #ff5a35 50%, #ff8f75);
}

.channel {
  width: 60px;
  margin-left: 6px;
  display: flex;
  flex-direction: column;
  white-space: nowrap;
  color: #aaa;
  font-size: 6px;
  line-height: 10px;
}

.channel b {
  color: #fff;
  font-size: 8px;
}

.subscribe {
  height: 19px;
  width: 48px;
  border-radius: 10px;
  background: #f1f1f1;
  color: #0f0f0f;
  font-weight: 500;
}

.actions {
  display: flex;
  gap: 4px;
  margin-left: auto;
  font-weight: 500;
}

.actions button {
  height: 18px;
  border-radius: 9px;
  background: #222;
}

.actions .like {
  width: 68px;
  padding-left: 6px;
  display: flex;
  align-items: center;
  gap: 4px;
}

.like span {
  padding-right: 7px;
  border-right: 1px solid #444;
}

.share {
  width: 56px;
  padding-left: 13px;
}

.download {
  width: 65px;
  padding-left: 12px;
}

.clip {
  width: 39px;
  padding-left: 12px;
}

.more {
  width: 18px;
}

.description {
  height: 60px;
  margin-top: 6px;
  border-radius: 6px;
  background: #272727;
}

.secondary {
  width: 174px;
  padding-top: 15px;
}

.chips {
  display: flex;
  gap: 5px;
  overflow: hidden;
  mask-image: linear-gradient(90deg, #000 88%, transparent);
}

.chip {
  flex: none;
  height: 17px;
  padding: 0 5px;
  border-radius: 4px;
  background: #272727;
  font-size: 7px;
  font-weight: 500;
}

.chip.selected {
  padding: 0 6px;
  background: #f1f1f1;
  color: #0f0f0f;
}

.suggestion {
  display: flex;
  gap: 4px;
  margin-top: 9px;
}

.thumb {
  width: 84px;
  height: 47px;
  flex: none;
  border-radius: 4px;
  background: #eee;
  color: #111;
  font: 700 7px/10px Roboto, sans-serif;
  text-align: center;
  white-space: nowrap;
  overflow: hidden;
}

.suggestion-title {
  font-size: 7px;
  font-weight: 500;
  line-height: 10px;
}

/* stream overlay */
.socials {
  position: absolute;
  left: 391px;
  bottom: 23px;
  z-index: 2;
  display: grid;
  grid-template-columns: 173px 176px auto;
  align-items: center;
}

.social {
  display: flex;
  align-items: center;
  gap: 1px;
  font-size: 21px;
  font-weight: 900;
  line-height: 28px;
  -webkit-text-stroke: 1px #fff;
}

/* taskbar */
.taskbar {
  height: 27px;
  background: linear-gradient(90deg, #20282c, #272a31 40%, #292b3a 60%, #252733 82%, #36203c 93%, #2b2430);
}

.start {
  width: 32px;
  display: grid;
  place-items: center;
}

.task-search {
  width: 192px;
  height: 27px;
  padding: 0 6px 0 8px;
  border: 1px solid #5a5a5a;
  background: #383838;
  display: flex;
  align-items: center;
}

.task-search input {
  flex: 1;
  min-width: 0;
  padding-left: 6px;
  font-size: 9px;
}

.task-search input::placeholder {
  color: #ccc;
}

.apps {
  width: 525px;
  height: 27px;
  display: flex;
}

.apps button {
  flex: 1;
  display: grid;
  place-items: center;
  position: relative;
}

.apps .open::after {
  content: "";
  position: absolute;
  left: 3px;
  right: 3px;
  bottom: 0;
  height: 2px;
  background: #76b9ed;
}

.apps .current {
  background: #4c4c57;
}

.apps .current::after {
  left: 0;
  right: 0;
}

.count {
  position: absolute;
  right: 6px;
  bottom: 3px;
  padding: 0 1px;
  border-radius: 5px;
  background: #dc4350;
  font-size: 6px;
  line-height: 9px;
}

.tray {
  margin-left: auto;
  display: flex;
  align-items: center;
}

.weather {
  display: flex;
  align-items: center;
  gap: 6px;
}

.tray-icons {
  display: flex;
  align-items: center;
  gap: 6px;
  margin-left: 14px;
}

.clock {
  width: 46px;
  display: flex;
  flex-direction: column;
  text-align: center;
  font-size: 8px;
  line-height: 12px;
}

.notifications {
  margin: 0 16px 0 6px;
}
```
